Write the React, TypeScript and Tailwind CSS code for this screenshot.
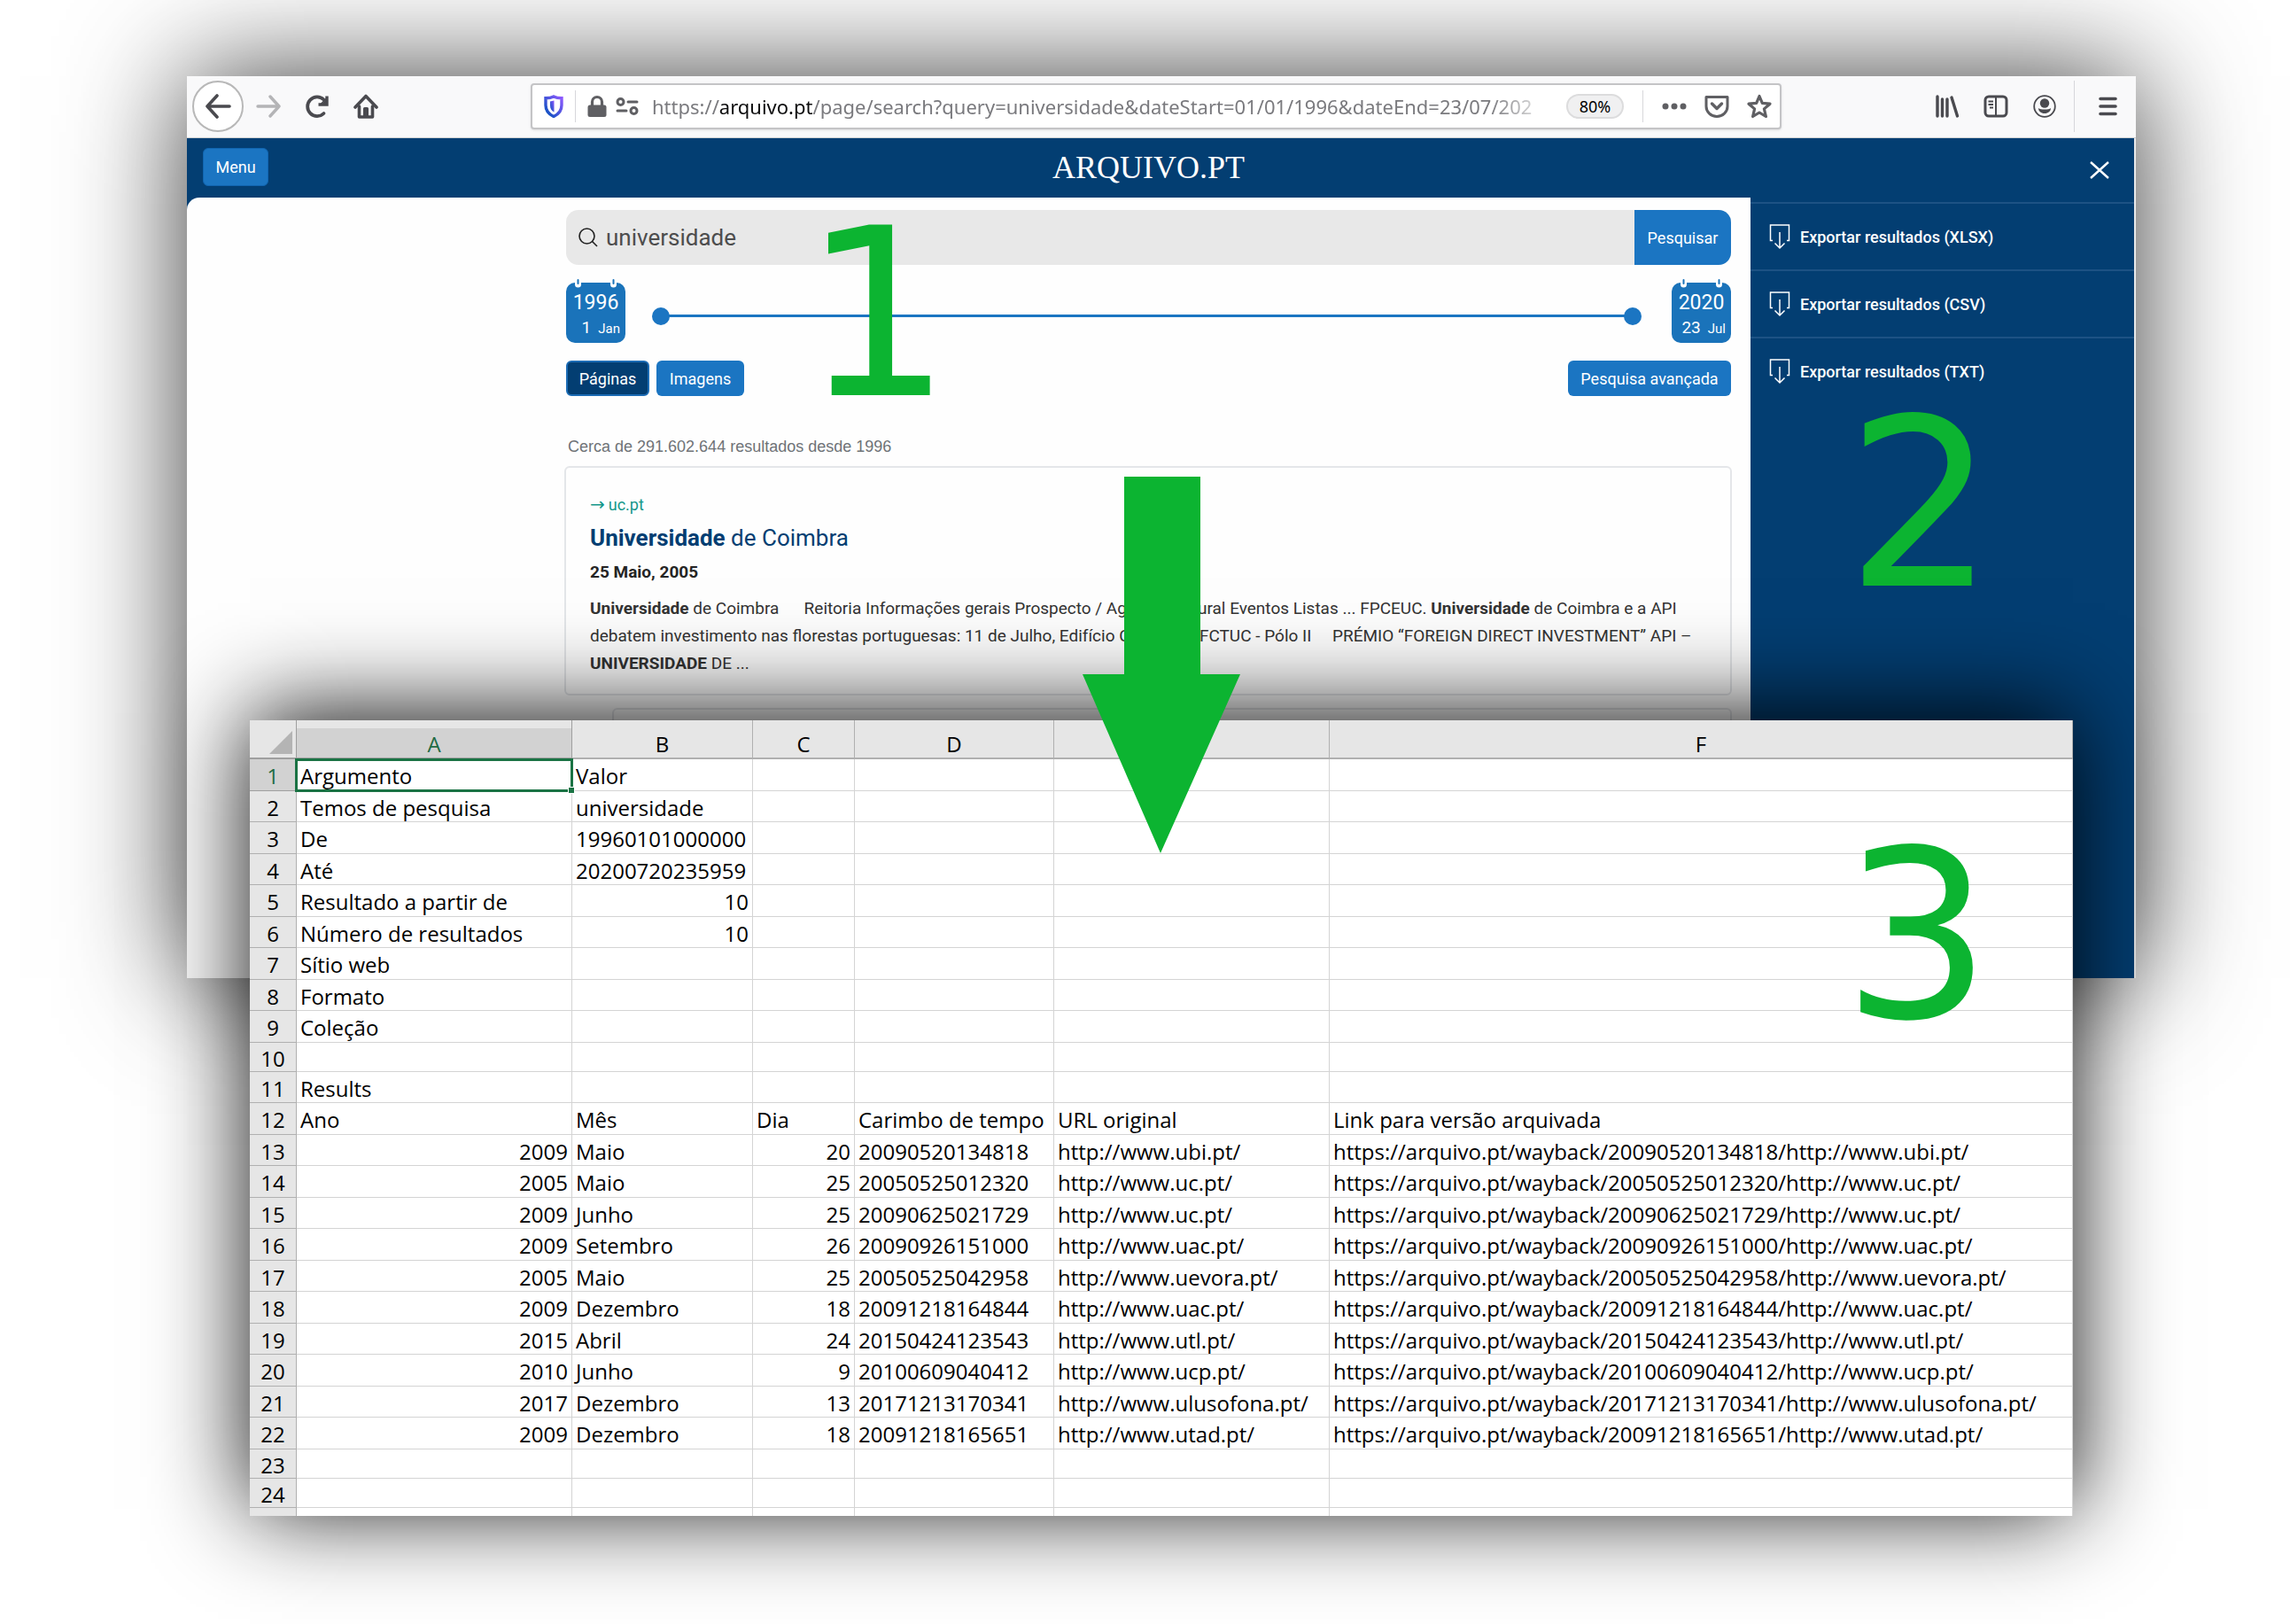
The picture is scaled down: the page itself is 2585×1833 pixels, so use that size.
import type { ReactNode } from 'react';

interface Row {
  n: number;
  cells: (string | number)[];
}

const rows: Row[] = [
  { n: 1, cells: ['Argumento', 'Valor'] },
  { n: 2, cells: ['Temos de pesquisa', 'universidade'] },
  { n: 3, cells: ['De', '19960101000000'] },
  { n: 4, cells: ['Até', '20200720235959'] },
  { n: 5, cells: ['Resultado a partir de', 10] },
  { n: 6, cells: ['Número de resultados', 10] },
  { n: 7, cells: ['Sítio web'] },
  { n: 8, cells: ['Formato'] },
  { n: 9, cells: ['Coleção'] },
  { n: 10, cells: [] },
  { n: 11, cells: ['Results'] },
  { n: 12, cells: ['Ano', 'Mês', 'Dia', 'Carimbo de tempo', 'URL original', 'Link para versão arquivada'] },
  { n: 13, cells: [2009, 'Maio', 20, '20090520134818', 'http://www.ubi.pt/', 'https://arquivo.pt/wayback/20090520134818/http://www.ubi.pt/'] },
  { n: 14, cells: [2005, 'Maio', 25, '20050525012320', 'http://www.uc.pt/', 'https://arquivo.pt/wayback/20050525012320/http://www.uc.pt/'] },
  { n: 15, cells: [2009, 'Junho', 25, '20090625021729', 'http://www.uc.pt/', 'https://arquivo.pt/wayback/20090625021729/http://www.uc.pt/'] },
  { n: 16, cells: [2009, 'Setembro', 26, '20090926151000', 'http://www.uac.pt/', 'https://arquivo.pt/wayback/20090926151000/http://www.uac.pt/'] },
  { n: 17, cells: [2005, 'Maio', 25, '20050525042958', 'http://www.uevora.pt/', 'https://arquivo.pt/wayback/20050525042958/http://www.uevora.pt/'] },
  { n: 18, cells: [2009, 'Dezembro', 18, '20091218164844', 'http://www.uac.pt/', 'https://arquivo.pt/wayback/20091218164844/http://www.uac.pt/'] },
  { n: 19, cells: [2015, 'Abril', 24, '20150424123543', 'http://www.utl.pt/', 'https://arquivo.pt/wayback/20150424123543/http://www.utl.pt/'] },
  { n: 20, cells: [2010, 'Junho', 9, '20100609040412', 'http://www.ucp.pt/', 'https://arquivo.pt/wayback/20100609040412/http://www.ucp.pt/'] },
  { n: 21, cells: [2017, 'Dezembro', 13, '20171213170341', 'http://www.ulusofona.pt/', 'https://arquivo.pt/wayback/20171213170341/http://www.ulusofona.pt/'] },
  { n: 22, cells: [2009, 'Dezembro', 18, '20091218165651', 'http://www.utad.pt/', 'https://arquivo.pt/wayback/20091218165651/http://www.utad.pt/'] },
  { n: 23, cells: [] },
  { n: 24, cells: [] },
];

const columns = ['A', 'B', 'C', 'D', 'E', 'F'];
const exportFormats = ['XLSX', 'CSV', 'TXT'];

// Empty rows are lower than filled ones, and filled rows alternate by a pixel
function rowHeight(row: Row) {
  if (row.cells.length === 0) return 'h-[33px]';
  const tall = row.n < 10 ? row.n % 2 === 1 : row.n % 2 === 0;
  return tall ? 'h-[36px]' : 'h-[35px]';
}

function ToolbarButton({ label, children }: { label: string; children: ReactNode }) {
  return (
    <button type="button" aria-label={label} className="flex size-7 shrink-0 items-center justify-center">
      {children}
    </button>
  );
}

function BrowserToolbar() {
  return (
    <div className="flex h-[70px] items-center border-b border-[#cfcfd1] bg-[#f9f9fa] pb-[2px] pl-[6px] text-[#4a4a4f]">
      <button type="button" aria-label="Back" className="flex size-[58px] shrink-0 items-center justify-center rounded-full border-2 border-[#b8b8b8] bg-white">
        <svg width="30" height="30" viewBox="0 0 30 30" fill="none" stroke="currentColor" strokeWidth="3.6" strokeLinecap="round" strokeLinejoin="round">
          <path d="M28 15H3M14 3 3 15l11 12" />
        </svg>
      </button>
      <div className="ml-[14px] flex gap-[27px]">
        <ToolbarButton label="Forward">
          <svg width="28" height="28" viewBox="0 0 28 28" fill="none" stroke="#b4b4b6" strokeWidth="3.4" strokeLinecap="round" strokeLinejoin="round">
            <path d="M2 14h24M16 3l10 11-10 11" />
          </svg>
        </ToolbarButton>
        <ToolbarButton label="Reload">
          <svg width="28" height="28" viewBox="0 0 28 28" fill="none" stroke="currentColor" strokeWidth="3.8" strokeLinecap="round">
            <path d="M21.500 22A10.800 10.800 0 1 1 21.500 6.500" />
            <path d="M25 2.500v9.500h-9.500" strokeWidth="3.400" strokeLinecap="butt" />
            <path d="M25.500 4v8h-8z" fill="currentColor" strokeWidth="1" />
          </svg>
        </ToolbarButton>
        <ToolbarButton label="Home">
          <svg width="28" height="28" viewBox="0 0 28 28" fill="none" stroke="currentColor" strokeWidth="3.6" strokeLinecap="round" strokeLinejoin="round">
            <path d="M2 15 14 2.500 26 15" />
            <path d="M6.500 14v12h15V14" />
            <path d="M12.500 25v-8.500h3V25" strokeWidth="3" />
          </svg>
        </ToolbarButton>
      </div>

      <div className="ml-[172px] flex h-[52px] min-w-0 flex-1 items-center rounded-[4px] border-2 border-[#c4c4c6] bg-white pl-[13px] shadow-sm">
        <svg width="22" height="26" viewBox="0 0 22 26" fill="none" className="shrink-0">
          <defs>
            <linearGradient id="shield" x1="1" y1="0" x2="0" y2="1">
              <stop offset="0" stopColor="#9059ff" />
              <stop offset="1" stopColor="#0250bb" />
            </linearGradient>
          </defs>
          <path d="M11 2c3 1.500 6 1.800 9 1.800v8C20 18 16.500 22 11 24.500 5.500 22 2 18 2 11.800v-8C5 3.800 8 3.500 11 2z" stroke="url(#shield)" strokeWidth="3.400" />
          <path d="M11.500 6.500v13C8.500 18 7 15.500 7 12V7.500z" fill="url(#shield)" />
        </svg>
        <span className="ml-[13px] h-9 w-px shrink-0 bg-[#d7d7db]" />
        <svg width="22" height="26" viewBox="0 0 22 26" className="ml-[13px] shrink-0 text-[#5f5f63]" fill="none">
          <path d="M5.500 12V8a5.500 5.500 0 0 1 11 0v4" stroke="currentColor" strokeWidth="3.200" />
          <rect x="0.500" y="11.500" width="21" height="13.500" rx="2.500" fill="currentColor" />
        </svg>
        <svg width="26" height="22" viewBox="0 0 26 22" className="ml-[10px] shrink-0 text-[#5f5f63]" fill="none" stroke="currentColor" strokeWidth="3" strokeLinecap="round">
          <circle cx="5.500" cy="6" r="3.500" />
          <path d="M14 6h10M2 16h10" />
          <circle cx="20.500" cy="16" r="3.500" />
        </svg>
        <div className="ml-[15px] min-w-0 flex-1 font-['Noto_Sans',sans-serif] text-[22px] leading-8 whitespace-nowrap text-[#7a7a7e] [mask-image:linear-gradient(to_left,transparent,black_72px)]">
          https://<span className="text-[#0c0c0d]">arquivo.pt</span>/page/search?query=universidade&amp;dateStart=01/01/1996&amp;dateEnd=23/07/202
        </div>
        <button type="button" className="ml-[14px] h-7 w-[65px] shrink-0 rounded-full border-2 border-[#dcdcdd] bg-[#f0f0f1] font-['Noto_Sans',sans-serif] text-[18px] leading-6 text-black">
          80%
        </button>
        <span className="ml-[21px] h-9 w-px shrink-0 bg-[#d7d7db]" />
        <div className="mr-[9px] ml-[21px] flex gap-5 text-[#5f5f63]">
          <ToolbarButton label="Page actions">
            <svg width="28" height="28" viewBox="0 0 28 28" fill="currentColor">
              <circle cx="4" cy="14" r="3.500" />
              <circle cx="14" cy="14" r="3.500" />
              <circle cx="24" cy="14" r="3.500" />
            </svg>
          </ToolbarButton>
          <ToolbarButton label="Save to Pocket">
            <svg width="28" height="28" viewBox="0 0 28 28" fill="none" stroke="currentColor" strokeWidth="3" strokeLinecap="round" strokeLinejoin="round">
              <path d="M2 3.500h24V14a12 11.500 0 0 1-24 0z" />
              <path d="m8.500 11 5.500 5.500 5.500-5.500" strokeWidth="3.500" />
            </svg>
          </ToolbarButton>
          <ToolbarButton label="Bookmark">
            <svg width="28" height="28" viewBox="0 0 28 28" fill="none" stroke="currentColor" strokeWidth="3.200" strokeLinejoin="round">
              <path d="m14 2.500 3.300 7.900 8.700.8-6.600 5.700 2 8.600L14 21l-7.400 4.500 2-8.600L2 11.200l8.700-.8z" />
            </svg>
          </ToolbarButton>
        </div>
      </div>

      <div className="ml-[173px] flex items-center gap-[27px]">
        <ToolbarButton label="Library">
          <svg width="28" height="28" viewBox="0 0 28 28" fill="none" stroke="currentColor" strokeWidth="3.400" strokeLinecap="round">
            <path d="M3 3v22M8.500 6v19M14 6v19M19 4l6.500 21" />
          </svg>
        </ToolbarButton>
        <ToolbarButton label="Sidebar">
          <svg width="28" height="28" viewBox="0 0 28 28" fill="none" stroke="currentColor" strokeWidth="3">
            <rect x="2" y="3" width="24" height="22" rx="4" />
            <path d="M14 3v22" strokeWidth="2" />
            <path d="M5.500 8.500H11M5.500 12H11M7 15.500h4" strokeWidth="1.800" />
          </svg>
        </ToolbarButton>
        <ToolbarButton label="Account">
          <svg width="28" height="28" viewBox="0 0 28 28" fill="none">
            <circle cx="14" cy="14" r="11.800" stroke="currentColor" strokeWidth="1.800" />
            <circle cx="14" cy="10.500" r="5.200" fill="currentColor" />
            <path d="M7 16c2 2 12 2 14 0 0 3.500-3 6-7 6s-7-2.500-7-6z" fill="currentColor" />
          </svg>
        </ToolbarButton>
      </div>
      <span className="ml-[19px] h-[58px] w-px bg-[#d7d7db]" />
      <div className="mr-[18px] ml-[23px]">
        <ToolbarButton label="Open menu">
          <svg width="28" height="28" viewBox="0 0 28 28" fill="none" stroke="currentColor" strokeWidth="3.600" strokeLinecap="round">
            <path d="M6 5.500h17M6 14h17M6 22.500h17" />
          </svg>
        </ToolbarButton>
      </div>
    </div>
  );
}

function Calendar({ year, day, month }: { year: string; day: string; month: string }) {
  return (
    <button type="button" className="relative mt-1 h-[68px] w-[67px] rounded-[10px] bg-[#1a73ba] text-white">
      <svg width="67" height="12" viewBox="0 0 67 12" className="absolute -top-1 left-0" fill="none" strokeLinecap="round">
        <path d="M13.500 0v6M53.500 0v6" stroke="#fff" strokeWidth="7" />
        <path d="M13.500 1v4M53.500 1v4" stroke="#1a73ba" strokeWidth="2" />
      </svg>
      <span className="block pt-[6px] text-center text-[23px] leading-7">{year}</span>
      <span className="flex items-baseline justify-end gap-2 pr-[6px] text-[19px] leading-7">
        {day}
        <span className="text-[15px]">{month}</span>
      </span>
    </button>
  );
}

function DateHandle({ label, value }: { label: string; value: number }) {
  return (
    <input
      type="range"
      aria-label={label}
      min={1996}
      max={2020}
      defaultValue={value}
      className="pointer-events-none absolute inset-0 h-5 w-full appearance-none bg-transparent [&::-webkit-slider-thumb]:pointer-events-auto [&::-webkit-slider-thumb]:size-5 [&::-webkit-slider-thumb]:appearance-none [&::-webkit-slider-thumb]:rounded-full [&::-webkit-slider-thumb]:bg-[#1b75c2]"
    />
  );
}

function SearchPage() {
  return (
    <main className="min-w-0 flex-1">
      <header className="flex h-[67px] items-center justify-between bg-[#033e72] pr-[571px] pb-[2px] pl-[18px]">
        <button type="button" className="h-[43px] w-[74px] rounded-[6px] border border-[#1165b0] bg-[#1b75c2] text-[18px] text-white">
          Menu
        </button>
        <a href="#inicio" className="font-['Liberation_Serif',serif] text-[36px] leading-none text-white">ARQUIVO.PT</a>
      </header>

      <div className="bg-[#033e72]">
        <div className="h-[881px] rounded-tl-[14px] bg-[#fefefe] pt-[14px] pr-[22px] pl-[428px]">
          <form className="flex h-[62px] overflow-hidden rounded-[14px] bg-[#e8e8e8]">
            <label htmlFor="query" className="flex items-center pl-[14px]">
              <svg width="22" height="22" viewBox="0 0 22 22" fill="none" stroke="#222" strokeWidth="1.600">
                <circle cx="9.500" cy="9.500" r="8.500" />
                <path d="m15.500 15.500 5.500 5.500" />
              </svg>
            </label>
            <input id="query" type="text" aria-label="Pesquisa" defaultValue="universidade" className="min-w-0 flex-1 bg-transparent px-[9px] text-[26px] text-[#4d4d4d] outline-none" />
            <button type="button" className="w-[109px] bg-[#1b75c2] text-[18px] text-white">Pesquisar</button>
          </form>

          <div className="mt-4 flex items-center justify-between">
            <Calendar year="1996" day="1" month="Jan" />
            <div className="relative mt-3 mr-[34px] ml-[30px] h-5 flex-1">
              <span className="absolute inset-x-2 top-2 h-[3px] bg-[#1b75c2]" />
              <DateHandle label="Data inicial" value={1996} />
              <DateHandle label="Data final" value={2020} />
            </div>
            <Calendar year="2020" day="23" month="Jul" />
          </div>

          <div className="mt-5 flex gap-2 text-[18px] text-white">
            <button type="button" className="h-10 w-[94px] rounded-[6px] border-2 border-[#1b6bb4] bg-[#033e72]">Páginas</button>
            <button type="button" className="h-10 w-[99px] rounded-[6px] bg-[#1b75c2]">Imagens</button>
            <button type="button" className="ml-auto h-10 w-[184px] rounded-[6px] bg-[#1b75c2]">Pesquisa avançada</button>
          </div>

          <p className="mt-[45px] pl-[2px] font-['Liberation_Sans',sans-serif] text-[18px] leading-6 text-[#6f7377]">
            Cerca de 291.602.644 resultados desde 1996
          </p>

          <article className="mt-[10px] -mr-[1px] -ml-[2px] h-[259px] rounded-[6px] border-2 border-[#e4e6e9] px-[27px] pt-[26px] text-[19px] text-[#333]">
            <a href="#uc" className="block text-[18px] leading-[30px] text-[#15978a]">
              <span className="mr-1 font-['DejaVu_Sans',sans-serif] text-[20px]">→</span>
              uc.pt
            </a>
            <h2 className="mt-1 text-[26px] leading-9 text-[#033e72]">
              <b>Universidade</b> de Coimbra
            </h2>
            <p className="mt-[9px] leading-6 font-bold text-[#252525]">25 Maio, 2005</p>
            <div className="mt-[13px] leading-[31px] whitespace-pre">
              <p>
                <b>Universidade</b>
                {' de Coimbra      Reitoria Informações gerais Prospecto / Agenda Cultural Eventos Listas ... FPCEUC. '}
                <b>Universidade</b>
                {' de Coimbra e a API'}
              </p>
              <p>{'debatem investimento nas florestas portuguesas: 11 de Julho, Edifício Central da FCTUC - Pólo II     PRÉMIO “FOREIGN DIRECT INVESTMENT” API –'}</p>
              <p>
                <b>UNIVERSIDADE</b>
                {' DE ...'}
              </p>
            </div>
          </article>
          <article className="mt-[14px] -mr-[1px] ml-[52px] h-[200px] rounded-[6px] border-2 border-[#e4e6e9]" />
        </div>
      </div>
    </main>
  );
}

function ExportPanel() {
  return (
    <aside className="mr-[2px] w-[433px] shrink-0 bg-[#033e72] text-white">
      <div className="flex h-[72px] items-center justify-end pr-[28px]">
        <button type="button" aria-label="Fechar">
          <svg width="22" height="22" viewBox="0 0 22 22" fill="none" stroke="currentColor" strokeWidth="2.400">
            <path d="m1 2 20 18M21 2 1 20" />
          </svg>
        </button>
      </div>
      <ul>
        {exportFormats.map((format) => (
          <li key={format} className="h-[76px] border-t-2 border-[#1d5284]">
            <a href={'#' + format} className="flex h-full items-center pl-[21px] text-[18px] font-medium">
              <svg width="24" height="30" viewBox="0 0 24 30" fill="none" stroke="currentColor" strokeWidth="1.500">
                <path d="M4 19.500H1.500V2h21v17.500H20" />
                <path d="M12 10v18M6.500 22.500 12 28l5.500-5.500" />
              </svg>
              <span className="ml-[11px]">{`Exportar resultados (${format})`}</span>
            </a>
          </li>
        ))}
      </ul>
    </aside>
  );
}

function Sheet() {
  return (
    <div className="relative h-[898px] overflow-hidden bg-white">
      <table className="w-full table-fixed border-separate border-spacing-0 font-['Open_Sans',sans-serif] text-[24px] leading-7 text-black">
        <colgroup>
          <col className="w-[53px]" />
          <col className="w-[311px]" />
          <col className="w-[204px]" />
          <col className="w-[115px]" />
          <col className="w-[225px]" />
          <col className="w-[311px]" />
          <col />
        </colgroup>
        <thead>
          <tr className="h-[44px] bg-[#e6e6e6]">
            <th className="border-r border-b-2 border-[#9f9f9f] p-0">
              <svg width="26" height="26" viewBox="0 0 26 26" className="mt-2 ml-[22px]">
                <path d="M26 0v26H0z" fill="#b4b4b4" />
              </svg>
            </th>
            {columns.map((c) => (
              <th
                key={c}
                scope="col"
                className={
                  c === 'A'
                    ? 'border-r border-b-2 border-[#9f9f9f] bg-[linear-gradient(#e6e6e6_9px,#d2d2d2_9px)] p-0 pt-3 font-normal text-[#1f6b43]'
                    : 'border-r border-b-2 border-[#b0b0b0] p-0 pt-3 font-normal'
                }
              >
                {c}
              </th>
            ))}
          </tr>
        </thead>
        <tbody>
          {[...rows, { n: 25, cells: [] }].map((row) => (
            <tr key={row.n} className={rowHeight(row)}>
              <th
                scope="row"
                className={
                  row.n === 1
                    ? 'border-r border-b border-[#9f9f9f] bg-[#d2d2d2] p-0 pt-[3px] font-normal text-[#1f6b43]'
                    : 'border-r border-b border-[#b0b0b0] bg-[#e6e6e6] p-0 pt-[3px] font-normal'
                }
              >
                {row.n < 25 && row.n}
              </th>
              {columns.map((c, i) => (
                <td
                  key={c}
                  className={
                    typeof row.cells[i] === 'number'
                      ? 'border-r border-b border-[#d4d4d4] px-1 pt-[3px] pb-0 text-right whitespace-nowrap'
                      : 'border-r border-b border-[#d4d4d4] px-1 pt-[3px] pb-0 whitespace-nowrap'
                  }
                >
                  {row.cells[i]}
                </td>
              ))}
            </tr>
          ))}
        </tbody>
      </table>
      {/* selected cell A1 */}
      <div className="absolute top-[43px] left-[51px] h-[38px] w-[314px] border-[3px] border-[#1a7344]">
        <span className="absolute -right-[5px] -bottom-[5px] size-2 border border-white bg-[#1a7344]" />
      </div>
    </div>
  );
}

function Mark({ children }: { children: ReactNode }) {
  return <span className="font-['DejaVu_Sans',sans-serif] text-[264px] leading-none text-[#0cb431]">{children}</span>;
}

export default function App() {
  return (
    <div className="relative min-h-screen overflow-hidden bg-white pt-[86px] pr-[174px] pb-[122px] pl-[211px] font-[Roboto,sans-serif]">
      <section className="relative h-[1018px] bg-[#e9e9ea] shadow-[0_0_126px_rgba(0,0,0,0.78)]">
        <BrowserToolbar />
        <div className="flex">
          <SearchPage />
          <ExportPanel />
        </div>
        <div className="absolute top-[137px] left-[695px]"><Mark>1</Mark></div>
        <div className="absolute top-[352px] right-[159px]"><Mark>2</Mark></div>
      </section>

      <section className="relative -mt-[291px] mr-[71px] ml-[71px] shadow-[0_-8px_102px_rgba(0,0,0,0.94)]">
        <Sheet />
        <div className="absolute top-[112px] right-[92px]"><Mark>3</Mark></div>
      </section>

      <svg width="178" height="425" viewBox="0 0 178 425" className="absolute top-[538px] left-[1222px]">
        <path d="M47 0h86v223h45L88 425 0 223h47z" fill="#0cb431" />
      </svg>
    </div>
  );
}
